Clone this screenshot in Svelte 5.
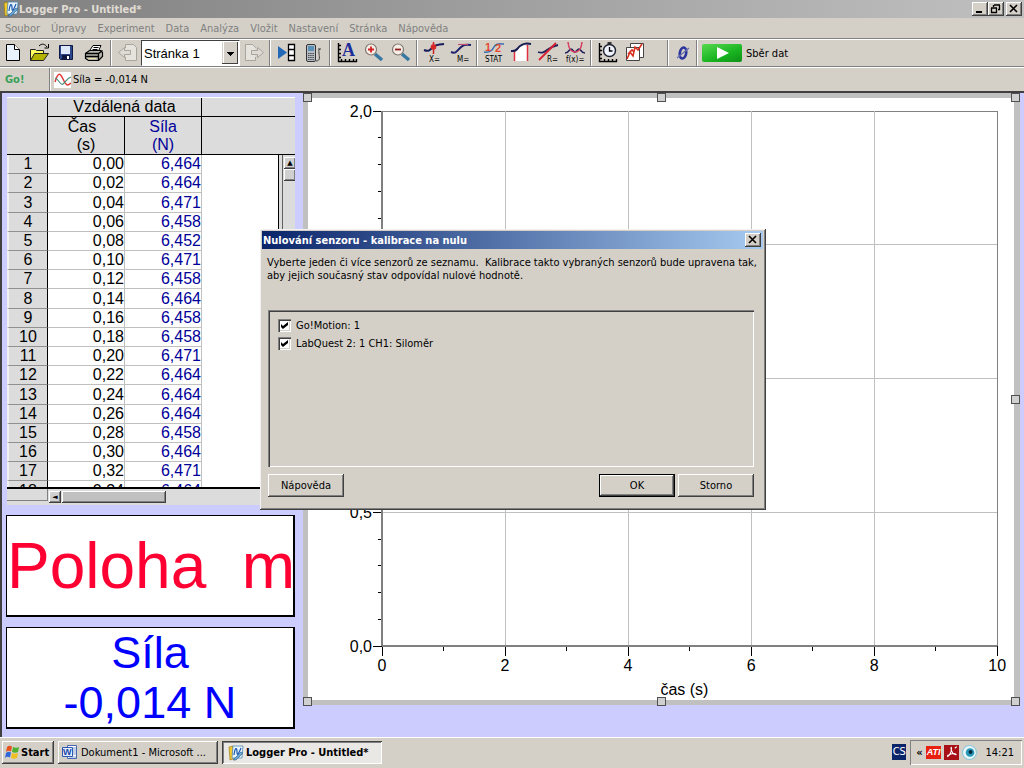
<script>
  const menus = ['Soubor', 'Úpravy', 'Experiment', 'Data', 'Analýza', 'Vložit', 'Nastavení', 'Stránka', 'Nápověda'];
  const forces = ['6,464', '6,464', '6,471', '6,458', '6,452', '6,471', '6,458', '6,464', '6,458', '6,458', '6,471', '6,464', '6,464', '6,464', '6,458', '6,464', '6,471', '6,464'];
  const rows = forces.map((force, i) => ({ n: i + 1, time: (i * 0.02).toFixed(2).replace('.', ','), force }));
  const yTicks = Array.from({ length: 21 }, (_, i) => i);
  const xTicks = Array.from({ length: 11 }, (_, i) => i);
  const handles = ['tl', 'tc', 'tr', 'ml', 'mr', 'bl', 'bc', 'br'];
  let sensors = $state([
    { id: 'motion', name: 'Go!Motion: 1', on: true },
    { id: 'force', name: 'LabQuest 2: 1 CH1: Siloměr', on: true }
  ]);
</script>

{#snippet appIcon()}
  <svg class="app-icon" viewBox="0 0 16 16" aria-hidden="true">
    <path d="M1 2l4-1v13l-3 1z" fill="#f0c830" stroke="#907010" stroke-width=".6" />
    <path d="M5 1h10l-1 12H4z" fill="#e8f4fc" stroke="#5088b0" stroke-width=".8" />
    <path d="M6 10c1-8 3-8 3-3s2 1 4-4" fill="none" stroke="#1858b0" stroke-width="1.2" />
    <path d="M5 15l8-8 2 1-7 7z" fill="#68a8d8" stroke="#285880" stroke-width=".6" />
  </svg>
{/snippet}

<div class="page">
  <header class="titlebar">
    {@render appIcon()}
    <h1>Logger Pro - Untitled*</h1>
    <button class="cap" aria-label="Minimalizovat"><svg viewBox="0 0 12 10"><path d="M2 8h6" stroke="#000" stroke-width="2" /></svg></button>
    <button class="cap" aria-label="Obnovit"><svg viewBox="0 0 12 10"><path d="M4 1h6M3.500 1v2M9.500 1v5M8 5.500h2M1 4h6M1.500 4v5M6.500 4v5M1 8.500h6" fill="none" stroke="#000" stroke-width="1.300" /></svg></button>
    <button class="cap last" aria-label="Zavřít"><svg viewBox="0 0 12 10"><path d="M2 1l7 7M9 1L2 8" stroke="#000" stroke-width="1.600" /></svg></button>
  </header>

  <nav class="menubar">
    {#each menus as m}<button>{m}</button>{/each}
  </nav>

  <div class="toolbar">
    <button class="tool" aria-label="Nový"><svg viewBox="0 0 24 24"><path d="M4.500 3.500h8l5 5v11h-13z" fill="#eaf3fd" stroke="#000" /><path d="M12.500 3.500v5h5" fill="#fff" stroke="#000" /></svg></button>
    <button class="tool" aria-label="Otevřít"><svg viewBox="0 0 24 24"><path d="M1.500 19.500v-11h5l1 1h7v3" fill="#ffff60" stroke="#222" /><path d="M1.500 19.500l4-7h14l-5 7z" fill="#b4b400" stroke="#222" /><path d="M10 5c3-3 6-2 8 1" fill="none" stroke="#000" /><path d="M19.500 3v4h-4" fill="none" stroke="#000" /></svg></button>
    <button class="tool" aria-label="Uložit"><svg viewBox="0 0 24 24"><path d="M3.500 4.500h13v14h-12l-1-1z" fill="#2c468c" stroke="#101848" /><path d="M5 5h9v8H5z" fill="#dfe9fa" /><path d="M6 14h8v5H6z" fill="#101840" /><path d="M11 15h2v3h-2z" fill="#fff" /></svg></button>
    <button class="tool" aria-label="Tisk"><svg viewBox="0 0 24 24"><path d="M7 9l3-4.500h8L15.500 10" fill="#fff" stroke="#000" /><path d="M10.500 6.500h5M9.500 8.500h5" stroke="#000" /><path d="M2.500 12.500l4-3h11l2 2v4l-4 4h-10l-3-2z" fill="#b8b8b0" stroke="#000" stroke-width="1.200" /><path d="M2.500 12.500h13l4-3M15.500 12.500v7M3 15.500h12" fill="none" stroke="#000" stroke-width="1.300" /><path d="M5 17.500h8" stroke="#e8e0a0" /></svg></button>
    <i class="sep"></i>
    <button class="tool" aria-label="Předchozí stránka"><svg viewBox="0 0 24 24"><path d="M9.500 7V3.500h8l3 3v13h-11V16" fill="#e6e3dc" stroke="#a8a59e" /><path d="M2.500 11.500l6-5v3h6v4h-6v3z" fill="#dedbd4" stroke="#a8a59e" /></svg></button>
    <select class="combo" aria-label="Stránka"><option>Stránka 1</option></select>
    <button class="tool" aria-label="Další stránka"><svg viewBox="0 0 24 24"><path d="M13.500 7V6.500l-3-3h-7v16h10V16" fill="#e6e3dc" stroke="#a8a59e" /><path d="M21.500 11.500l-6-5v3h-6v4h6v3z" fill="#dedbd4" stroke="#a8a59e" /></svg></button>
    <i class="sep"></i>
    <button class="tool" aria-label="Prohlížeč dat"><svg viewBox="0 0 24 24"><path d="M3 5l9 6.500L3 18z" fill="#2468b8" /><path d="M13.500 3.500h6v16h-6zM13.500 8.500h6M13.500 14.500h6" fill="#fff" stroke="#000" stroke-width="1.300" /></svg></button>
    <button class="tool" aria-label="LabQuest"><svg viewBox="0 0 24 24"><rect x="4.500" y="3.500" width="9" height="17" rx="1.500" fill="#b8bcc0" stroke="#303438" /><path d="M6 5h6v5H6z" fill="#5890b8" /><path d="M6 12.500h6M6 14.500h6M6 16.500h6M6 18.500h6" stroke="#404850" stroke-dasharray="1.500 .7" /><path d="M14 20c5 0 3-5 3-8s-1-3 1-4M16 8h3" fill="none" stroke="#404040" /></svg></button>
    <i class="sep"></i>
    <button class="tool" aria-label="Automatické měřítko"><svg viewBox="0 0 24 24"><path d="M3.500 2v18.500H22M3 4.500h3M3 8.500h3M3 12.500h3M3 16.500h3M6.500 18v3M10.500 18v3M14.500 18v3M18.500 18v3M21.500 18v3" fill="none" stroke="#000" stroke-width="1.400" /><text x="7" y="15" font-family="Liberation Serif, serif" font-size="18" font-weight="bold" fill="#1c2c98">A</text></svg></button>
    <button class="tool" aria-label="Přiblížit"><svg viewBox="0 0 24 24"><path d="M13 13l7 6" stroke="#3878a0" stroke-width="3.500" /><circle cx="9" cy="8.500" r="5.500" fill="#f8eee8" stroke="#807870" stroke-width="1.200" /><path d="M6 8.500h6M9 5.500v6" stroke="#d02020" stroke-width="1.800" /></svg></button>
    <button class="tool" aria-label="Oddálit"><svg viewBox="0 0 24 24"><path d="M13 13l7 6" stroke="#3878a0" stroke-width="3.500" /><circle cx="9" cy="8.500" r="5.500" fill="#f8eee8" stroke="#807870" stroke-width="1.200" /><path d="M6 8.500h6" stroke="#902020" stroke-width="1.800" /></svg></button>
    <i class="sep"></i>
    <button class="tool" aria-label="Odečet"><svg viewBox="0 0 24 24"><path d="M2 9c5 2 6 0 9-3s5-2 11-3" fill="none" stroke="#181c58" stroke-width="2" /><path d="M11.500 1v12" stroke="#d02020" stroke-width="1.500" /><circle cx="11.500" cy="6" r="2.800" fill="#d82828" /><text class="glyph" x="7" y="21">X=</text></svg></button>
    <button class="tool" aria-label="Tečna"><svg viewBox="0 0 24 24"><path d="M2 11c5 2 6-1 9-4s5-4 11-3" fill="none" stroke="#20206c" stroke-width="2" /><path d="M9 3.500h10" stroke="#c05070" stroke-width="1.200" /><text class="glyph" x="8" y="21">M=</text></svg></button>
    <i class="sep"></i>
    <button class="tool" aria-label="Statistika"><svg viewBox="0 0 24 24"><path d="M2 11c5 1 8-1 10-5s5-3 10-3" fill="none" stroke="#3870b0" stroke-width="1.600" /><text x="3" y="10" font-family="Liberation Sans, sans-serif" font-size="11" font-weight="bold" fill="#e84830">1</text><text x="13" y="11" font-family="Liberation Sans, sans-serif" font-size="11" font-weight="bold" fill="#e84830">2</text><text class="glyph" x="3" y="21">STAT</text></svg></button>
    <button class="tool" aria-label="Integrál"><svg viewBox="0 0 24 24"><path d="M6 9l9-5 3 1v15H6z" fill="#fff" /><path d="M5.500 9v11M18.500 4v16" stroke="#e03040" stroke-width="1.500" /><path d="M2 10c6 1 6-3 9-5s5-3 11-2" fill="none" stroke="#181c50" stroke-width="2" /></svg></button>
    <button class="tool" aria-label="Lineární proložení"><svg viewBox="0 0 24 24"><path d="M2 11c8 3 8-5 20-7" fill="none" stroke="#20205c" stroke-width="1.800" /><path d="M3 19L20 2" stroke="#d82030" stroke-width="1.800" /><text class="glyph" x="11" y="21">R=</text></svg></button>
    <button class="tool" aria-label="Proložení křivky"><svg viewBox="0 0 24 24"><path d="M2 12c4 0 4-4 6-4s2 3 4 3 2-3 4-3 2 4 6 4" fill="none" stroke="#20205c" stroke-width="1.600" /><path d="M5 1c1 9 4 10 7 10s6-1 7-10" fill="none" stroke="#d84060" stroke-width="1.600" /><text class="glyph" x="3" y="21">f(x)=</text></svg></button>
    <i class="sep"></i>
    <button class="tool" aria-label="Nastavení sběru"><svg viewBox="0 0 24 24"><path d="M3.500 2v18.500H21M3 5.500h3M3 9.500h3M3 13.500h3M3 17.500h3M8.500 18v3M12.500 18v3M16.500 18v3M20.500 18v3" fill="none" stroke="#000" stroke-width="1.400" /><circle cx="13.500" cy="9.500" r="6" fill="#f0f4ff" stroke="#202430" stroke-width="1.500" /><path d="M13.500 6v4h3M11.500 2h4" fill="none" stroke="#000" stroke-width="1.300" /></svg></button>
    <button class="tool" aria-label="Uložit měření"><svg viewBox="0 0 24 24"><path d="M7.500 2.500h13v14h-13z" fill="#fff" stroke="#444" /><path d="M3.500 6.500h13v13h-13z" fill="#fff" stroke="#444" /><path d="M4 18l3-7 3 4 2-9 3 3 4-6M5 13l4-4 2 2" fill="none" stroke="#d83020" stroke-width="1.600" /></svg></button>
    <i class="sep wide"></i>
    <button class="tool narrow" aria-label="Vynulovat"><svg viewBox="0 0 24 24"><ellipse cx="12" cy="12" rx="3.200" ry="5.500" transform="rotate(10 12 12)" fill="none" stroke="#2c349c" stroke-width="2.600" /><path d="M6 17L18 7" stroke="#6870b0" stroke-width="1.300" /></svg></button>
    <i class="sep"></i>
    <button class="collect"><span class="go"><svg viewBox="0 0 40 18" aria-hidden="true"><path d="M15 3l12 6-12 6z" fill="#fff" /></svg></span>Sběr dat</button>
  </div>

  <div class="sensorbar">
    <b class="brand">Go!</b>
    <i class="sep"></i>
    <svg class="wave" viewBox="0 0 18 16" aria-hidden="true"><path d="M0 0h17v16H0z" fill="#fff" /><path d="M1 10C5-3 7 3 10 9s4 4 7 2" fill="none" stroke="#e03838" stroke-width="1.500" /><path d="M1 6c4 1 5 8 8 6s4-6 8-7" fill="none" stroke="#489080" stroke-width="1.200" /></svg>
    <span>Síla = -0,014 N</span>
  </div>

  <main class="workspace">
    <section class="left">
      <div class="sheet">
        <div class="grid">
          <table>
            <colgroup><col class="c-n" /><col class="c-v" /><col class="c-v" /><col /></colgroup>
            <thead>
              <tr class="set"><th rowspan="2"></th><th colspan="2">Vzdálená data</th><th></th></tr>
              <tr class="cols"><th><span class="name">Čas</span><br />(s)</th><th class="blue">Síla<br />(N)</th><th></th></tr>
            </thead>
            <tbody>
              {#each rows as r}
                <tr><th scope="row">{r.n}</th><td>{r.time}</td><td class="blue">{r.force}</td><td></td></tr>
              {/each}
            </tbody>
          </table>
          <div class="vscroll"><button aria-label="Nahoru">▲</button><i></i></div>
        </div>
        <div class="hscroll"><span class="corner"></span><button aria-label="Vlevo">◄</button><i></i></div>
      </div>
      <div class="readout red">Poloha&nbsp; m</div>
      <div class="readout force">Síla<br />-0,014 N</div>
    </section>

    <section class="graph">
      {#each handles as h}<i class="handle {h}"></i>{/each}
      <svg class="plot" role="img" aria-label="čas (s)">
        {#each [0, 25, 50, 75] as p}<line x1="0" x2="100%" y1="{p}%" y2="{p}%" stroke={p ? '#c0c0c0' : '#808080'} />{/each}
        {#each [20, 40, 60, 80, 100] as p}<line y1="0" y2="100%" x1="{p}%" x2="{p}%" stroke={p === 100 ? '#808080' : '#c0c0c0'} />{/each}
        {#each yTicks as t}
          <svg y="{t * 5}%" overflow="visible"><line x1={t % 5 ? -4 : -9} x2="0" y1="0" y2="0" stroke="#000" /></svg>
        {/each}
        {#each xTicks as t}
          <svg x="{t * 10}%" y="100%" overflow="visible">
            <line x1="0" x2="0" y1="0" y2={t % 2 ? 5 : 10} stroke="#000" />
            {#if t % 2 === 0}<text y="25" text-anchor="middle">{t}</text>{/if}
          </svg>
        {/each}
        {#each [['2,0', 0], ['0,5', 75], ['0,0', 100]] as [label, p]}
          <text x="-10" y="{p}%" dy="6" text-anchor="end">{label}</text>
        {/each}
        <line x1="0" x2="0" y1="0" y2="100%" stroke="#808080" stroke-width="2" />
        <line x1="0" x2="100%" y1="100%" y2="100%" stroke="#808080" stroke-width="2" />
      </svg>
      <div class="xlabel">čas (s)</div>
    </section>
  </main>

  <footer class="taskbar">
    <button class="task start">
      <svg viewBox="0 0 16 16" aria-hidden="true"><path d="M3 3c2-1.500 3-1.500 5-.5L7 7.500c-2-1-3-1-5 .500z" fill="#e85020" /><path d="M9 3c2 1 4 1 6 0l-1 5c-2 1-4 1-6 0z" fill="#50b030" /><path d="M2 9c2-1.500 3-1.500 5-.5l-1 5c-2-1-3-1-5 .500z" fill="#3068d8" /><path d="M8 9c2 1 4 1 6 0l-1 5c-2 1-4 1-6 0z" fill="#f0c020" /></svg>
      <b>Start</b>
    </button>
    <button class="task">
      <svg viewBox="0 0 16 16" aria-hidden="true"><path d="M5.500 1.500h9v13h-9z" fill="#fff" stroke="#4868b0" /><path d="M11 4h3M11 6h3M11 8h3M11 10h3M7 13h7" stroke="#88a0d0" /><path d="M.5 3.500h10v9H.5z" fill="#e4ecfc" stroke="#3058b0" /><text x="1" y="11" font-family="Liberation Sans, sans-serif" font-size="9" font-weight="bold" fill="#1848a8">W</text></svg>
      <span>Dokument1 - Microsoft ...</span>
    </button>
    <button class="task active">{@render appIcon()}<b>Logger Pro - Untitled*</b></button>
    <span class="spring"></span>
    <span class="lang">CS</span>
    <div class="tray">
      <span class="chev">«</span>
      <span class="ati">ATI</span>
      <svg viewBox="0 0 14 14" aria-hidden="true"><path d="M0 0h14v14H0z" fill="#a81018" /><path d="M3 11c3-2 4-5 4-8 0-2-1 0 0 2 1 3 3 4 4 4s0-1-2-1-4 1-6 2" fill="none" stroke="#fff" /><path d="M10 3l2-1.500" stroke="#fff" /></svg>
      <svg viewBox="0 0 14 14" aria-hidden="true"><circle cx="7" cy="7" r="6.500" fill="#e8f6fa" stroke="#90c8d8" /><circle cx="7.500" cy="7" r="4" fill="#2898b8" /><circle cx="8" cy="6.500" r="1.800" fill="#08283c" /></svg>
      <time>14:21</time>
    </div>
  </footer>

  <div class="dialog" role="dialog" aria-labelledby="dlg-title">
    <div class="dlg-bar"><h2 id="dlg-title">Nulování senzoru - kalibrace na nulu</h2><button class="cap" aria-label="Zavřít okno"><svg viewBox="0 0 12 10"><path d="M2 1l7 7M9 1L2 8" stroke="#000" stroke-width="1.600" /></svg></button></div>
    <p>Vyberte jeden či více senzorů ze seznamu.&nbsp; Kalibrace takto vybraných senzorů bude upravena tak,<br />aby jejich současný stav odpovídal nulové hodnotě.</p>
    <div class="list">
      {#each sensors as s}
        <label for={s.id}><input type="checkbox" id={s.id} bind:checked={s.on} />{s.name}</label>
      {/each}
    </div>
    <div class="actions">
      <button class="push">Nápověda</button>
      <span class="spring"></span>
      <button class="push default">OK</button>
      <button class="push">Storno</button>
    </div>
  </div>
</div>

<style>
  :global(body) { margin: 0; }
  .page {
    --face: #d4d0c8;
    --out: inset -1px -1px #404040, inset 1px 1px #fff, inset -2px -2px #808080;
    position: relative;
    display: flex;
    flex-direction: column;
    height: 100vh;
    min-height: 560px;
    overflow: hidden;
    background: var(--face);
    font: 11px/13px "DejaVu Sans Condensed", "DejaVu Sans", sans-serif;
    color: #000;
  }
  .page *, .page *::after { box-sizing: border-box; }
  h1, h2, p { margin: 0; font-size: 11px; }
  button { font: inherit; color: inherit; padding: 0; margin: 0; border: 0; background: none; white-space: nowrap; }
  svg { display: block; flex: none; }
  .spring { flex: 1; }

  .titlebar { display: flex; align-items: center; height: 18px; padding: 0 2px 0 3px; background: linear-gradient(90deg, #808080, #c0c0c0); color: #e0dcd4; }
  .titlebar h1 { flex: 1; }
  .app-icon { width: 16px; height: 16px; }
  .cap { width: 16px; height: 14px; padding: 1px 2px; background: var(--face); box-shadow: var(--out); }
  .cap svg { width: 12px; height: 10px; }
  .cap.last { margin-left: 2px; }

  .menubar { display: flex; align-items: center; gap: 11px; height: 21px; padding: 0 5px; border-bottom: 1px solid #808080; color: #808080; }
  .toolbar { display: flex; align-items: center; height: 28px; border-top: 1px solid #fff; border-bottom: 1px solid #808080; }
  .tool { width: 27px; flex: none; display: flex; justify-content: center; }
  .tool.narrow { width: 23px; }
  .tool svg { width: 24px; height: 24px; }
  .glyph { font: 8px "DejaVu Sans Condensed", sans-serif; }
  .sep { flex: none; width: 6px; height: 26px; background: linear-gradient(90deg, transparent 2px, #808080 2px 3px, #fff 3px 4px, transparent 4px); }
  .sep.wide { margin-left: 17px; }
  .combo {
    flex: none; width: 99px; height: 26px; padding: 0 20px 0 2px; appearance: none; border: 1px solid #404040; border-right-color: #fff; border-bottom-color: #fff; border-radius: 0;
    font: 13px "Liberation Sans", sans-serif; color: #000;
    background:
      linear-gradient(#000, #000) right 5px top 11px / 7px 1px no-repeat,
      linear-gradient(#000, #000) right 6px top 12px / 5px 1px no-repeat,
      linear-gradient(#000, #000) right 7px top 13px / 3px 1px no-repeat,
      linear-gradient(#000, #000) right 8px top 14px / 1px 1px no-repeat,
      linear-gradient(#404040, #404040) right 1px top 1px / 1px 22px no-repeat,
      linear-gradient(#404040, #404040) right 1px bottom 1px / 16px 1px no-repeat,
      linear-gradient(#fff, #fff) right 15px top 1px / 1px 22px no-repeat,
      linear-gradient(#d4d0c8, #d4d0c8) right 1px top 1px / 16px 22px no-repeat, #fff;
  }
  .collect { display: flex; align-items: center; gap: 4px; padding-left: 2px; }
  .go { border-radius: 2px; background: linear-gradient(160deg, #58d850, #18b420 60%, #109018); }
  .go svg { width: 40px; height: 18px; }

  .sensorbar { display: flex; align-items: center; height: 24px; padding-left: 5px; border-top: 1px solid #fff; }
  .brand { width: 42px; color: #38a058; }
  .sensorbar .sep { height: 23px; }
  .wave { width: 18px; height: 16px; margin: 0 1px; }

  .workspace {
    flex: 1; min-height: 0; display: grid; grid-template-columns: minmax(0, 29fr) minmax(0, 72fr); gap: 8px;
    padding: 0 4px 8px; border: solid #404040; border-width: 2px 0 0 2px; background: #ccccff;
  }
  .left { display: flex; flex-direction: column; gap: 10px; min-height: 0; padding-top: 4px; }
  .sheet { flex: 1; min-height: 0; display: flex; flex-direction: column; margin-left: 1px; background: #dcdcdc; font: 16px/18px "Liberation Sans", sans-serif; }
  .grid { position: relative; flex: 1; min-height: 0; overflow: hidden; border-top: 1px solid #fff; border-bottom: 2px solid #000; }
  table { width: 100%; table-layout: fixed; border-collapse: separate; border-spacing: 0; }
  .c-n { width: 41px; }
  .c-v { width: 77px; }
  th, td { padding: 0; font-weight: normal; }
  thead th { border-right: 1px solid #000; border-bottom: 1px solid #000; }
  thead th:last-child { border-right: 0; }
  .set { height: 19px; }
  .cols { height: 38px; }
  .cols .name { margin-right: 8px; }
  .blue { color: #000099; }
  tbody tr { height: 19px; }
  tbody tr:nth-child(5n + 3) { height: 20px; }
  tbody th { border-right: 1px solid #000; border-bottom: 1px solid #909090; border-left: 2px solid #f0f0f0; background: #dcdcdc; }
  tbody td { text-align: right; background: #fff; border-right: 1px solid #c0c0c0; border-bottom: 1px solid #c0c0c0; }
  tbody td:last-child { border: 0; }
  .vscroll { position: absolute; top: 57px; right: 0; bottom: 0; width: 17px; padding: 2px 0 0 5px; border-left: 1px solid #000; background: linear-gradient(90deg, #dcdcdc 3px, #606060 3px 4px, #dcdcdc 4px); }
  .vscroll button, .vscroll i, .hscroll button, .hscroll i { display: block; width: 12px; height: 12px; background: #d0d0d0; box-shadow: var(--out); font: 7px/12px "DejaVu Sans", sans-serif; text-align: center; }
  .hscroll { display: flex; align-items: center; gap: 1px; height: 16px; }
  .hscroll .corner { width: 41px; height: 12px; align-self: start; border-bottom: 1px solid #808080; border-right: 1px solid #808080; }
  .hscroll i { width: 104px; background: #c0c0c0; }
  .readout { flex: none; height: 102px; border: 1px solid #000; border-right-width: 2px; border-bottom-width: 2px; background: #fff; text-align: center; white-space: nowrap; overflow: hidden; font-family: "Liberation Sans", sans-serif; }
  .red { font-size: 64px; line-height: 100px; color: #ff0033; }
  .force { font-size: 45px; line-height: 50px; color: #0000ff; }

  .graph {
    position: relative; display: grid; grid-template: 13px minmax(0, 1fr) 54px / 74px minmax(0, 1fr) 17px;
    margin-bottom: 24px; border: 5px solid #c0c0c0; border-right-width: 6px; background: #fff; font: 16px "Liberation Sans", sans-serif;
  }
  .plot { grid-area: 2 / 2; width: 100%; height: 100%; overflow: visible; shape-rendering: crispEdges; }
  .xlabel { grid-area: 3 / 2; align-self: end; text-align: center; line-height: 20px; padding-right: 10px; }
  .handle { position: absolute; width: 9px; height: 9px; border: 1px solid #505050; background: #d0d0d0; }
  .tl, .tc, .tr { top: -5px; }
  .bl, .bc, .br { bottom: -6px; }
  .tl, .ml, .bl { left: -5px; }
  .tr, .mr, .br { right: -6px; }
  .tc, .bc { left: calc(50% - 4px); }
  .ml, .mr { top: calc(50% - 4px); }

  .taskbar { display: flex; align-items: center; gap: 4px; height: 31px; padding: 0 2px 2px; border-top: 1px solid #fff; }
  .task { display: flex; align-items: center; gap: 3px; width: 160px; height: 23px; padding: 0 4px; background: var(--face); box-shadow: var(--out); }
  .task svg { width: 16px; height: 16px; }
  .task.start { width: 52px; padding: 0 2px; gap: 1px; }
  .task.active { background: #eae8e4; box-shadow: inset 1px 1px #404040, inset -1px -1px #fff, inset 2px 2px #808080; padding: 1px 3px 0 6px; gap: 2px; }
  .lang { width: 14px; height: 16px; overflow: hidden; background: #0a246a; color: #fff; line-height: 16px; text-align: center; }
  .tray { display: flex; align-items: center; gap: 3px; height: 25px; padding: 0 8px 0 6px; box-shadow: inset 1px 1px #808080, inset -1px -1px #fff; }
  .tray svg { width: 15px; height: 15px; }
  .chev { font-weight: bold; }
  .ati { padding: 0 1px; background: #e82010; color: #fff; font: italic bold 9px/13px "Liberation Sans", sans-serif; }
  time { margin-left: 5px; }

  .dialog { position: absolute; left: calc(50% - 252px); top: 229px; width: 506px; padding: 2px; background: var(--face); box-shadow: inset -1px -1px #404040, inset 1px 1px #f4f2ee, inset -2px -2px #808080; }
  .dlg-bar { display: flex; align-items: center; height: 18px; margin: 0 1px 0 0; padding: 0 2px 0 1px; background: linear-gradient(90deg, #0a246a, #a6caf0); color: #fff; }
  .dlg-bar h2 { flex: 1; }
  .dialog p { padding: 7px 5px 28px; white-space: nowrap; }
  .list { display: flex; flex-direction: column; gap: 5px; height: 157px; margin: 0 10px 0 6px; padding: 9px 10px; box-shadow: inset 1px 1px #808080, inset 2px 2px #404040, inset -1px -1px #fff; }
  .list label { display: flex; align-items: center; gap: 5px; }
  .list input { position: relative; width: 13px; height: 13px; margin: 0; appearance: none; background: #fff; box-shadow: inset 1px 1px #808080, inset 2px 2px #404040, inset -1px -1px #fff, inset -2px -2px #d4d0c8; }
  .list input:checked::after { content: ""; position: absolute; left: 3px; top: 3px; width: 7px; height: 7px; background: #000; clip-path: polygon(0 28%, 28% 57%, 100% 0, 100% 43%, 28% 100%, 0 71%); }
  .actions { display: flex; gap: 3px; padding: 7px 10px 11px 6px; }
  .push { width: 76px; height: 23px; background: var(--face); box-shadow: var(--out); }
  .push.default { border: 1px solid #000; }
</style>
